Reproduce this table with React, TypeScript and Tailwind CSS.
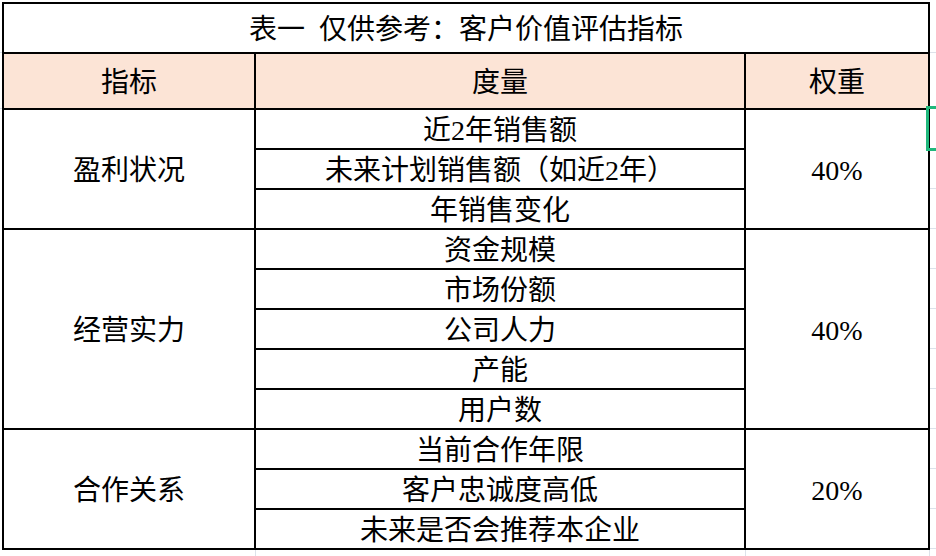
import React from 'react';

// 客户价值评估指标表
const groups = [
    { name: '盈利状况', weight: '40%', start: 'row-start-3', span: 'row-span-3', items: ['近2年销售额', '未来计划销售额（如近2年）', '年销售变化'] },
    { name: '经营实力', weight: '40%', start: 'row-start-6', span: 'row-span-5', items: ['资金规模', '市场份额', '公司人力', '产能', '用户数'] },
    { name: '合作关系', weight: '20%', start: 'row-start-11', span: 'row-span-3', items: ['当前合作年限', '客户忠诚度高低', '未来是否会推荐本企业'] },
];

const cell = 'bg-white flex items-center justify-center pt-[4px] text-[28px] leading-none';
const head = 'bg-[#fce4d6] flex items-center justify-center pt-[4px] text-[28px] leading-none';

const App = () => {
    return (
        <div className="w-[936px] h-[556px] bg-white overflow-hidden flex flex-col text-black font-['Liberation_Serif','Noto_Sans_CJK_SC',serif]">
            <div className="flex">
                {/* left sheet margin */}
                <div className="w-[2px] flex flex-col">
                    <div className="h-[53px] border-b border-[#dde2ea]" />
                    <div className="h-[56px] border-b border-[#dde2ea]" />
                </div>

                <div className="relative">
                    <div className="grid grid-cols-[250px_488px_182px] grid-rows-[48px_54px_repeat(11,38px)] gap-[2px] p-[2px] bg-black mt-[2px]">
                        <div className={`col-span-3 ${cell} pt-[3px]`}>
                            表一&nbsp;&nbsp;仅供参考：客户价值评估指标
                        </div>
                        <div className={head}>指标</div>
                        <div className={head}>度量</div>
                        <div className={head}>权重</div>

                        {groups.map((g) => (
                            <React.Fragment key={g.name}>
                                <div className={`col-start-1 ${g.start} ${g.span} ${cell}`}>{g.name}</div>
                                <div className={`col-start-2 ${g.start} ${g.span} flex flex-col gap-[2px]`}>
                                    {g.items.map((it) => (
                                        <div key={it} className={`flex-1 ${cell}`}>
                                            {it}
                                        </div>
                                    ))}
                                </div>
                                <div className={`col-start-3 ${g.start} ${g.span} ${cell}`}>{g.weight}</div>
                            </React.Fragment>
                        ))}
                    </div>

                    {/* selected cell marker */}
                    <div className="absolute left-[924px] top-[106px] w-[12px] h-[45px] border-[3px] border-r-0 border-[#1fb87c]" />
                </div>

                {/* right sheet margin */}
                <div className="flex-1 flex flex-col">
                    <div className="h-[53px] border-b border-[#dde2ea]" />
                    <div className="h-[56px] border-b border-[#dde2ea]" />
                    {Array.from({ length: 11 }).map((_, i) => (
                        <div key={i} className="h-[40px] border-b border-[#dde2ea]" />
                    ))}
                </div>
            </div>

            {/* bottom sheet margin */}
            <div className="flex-1 flex">
                <div className="w-[256px] border-r border-[#dde2ea]" />
                <div className="w-[490px] border-r border-[#dde2ea]" />
                <div className="w-[184px] border-r border-[#dde2ea]" />
            </div>
        </div>
    );
};

export default App;
